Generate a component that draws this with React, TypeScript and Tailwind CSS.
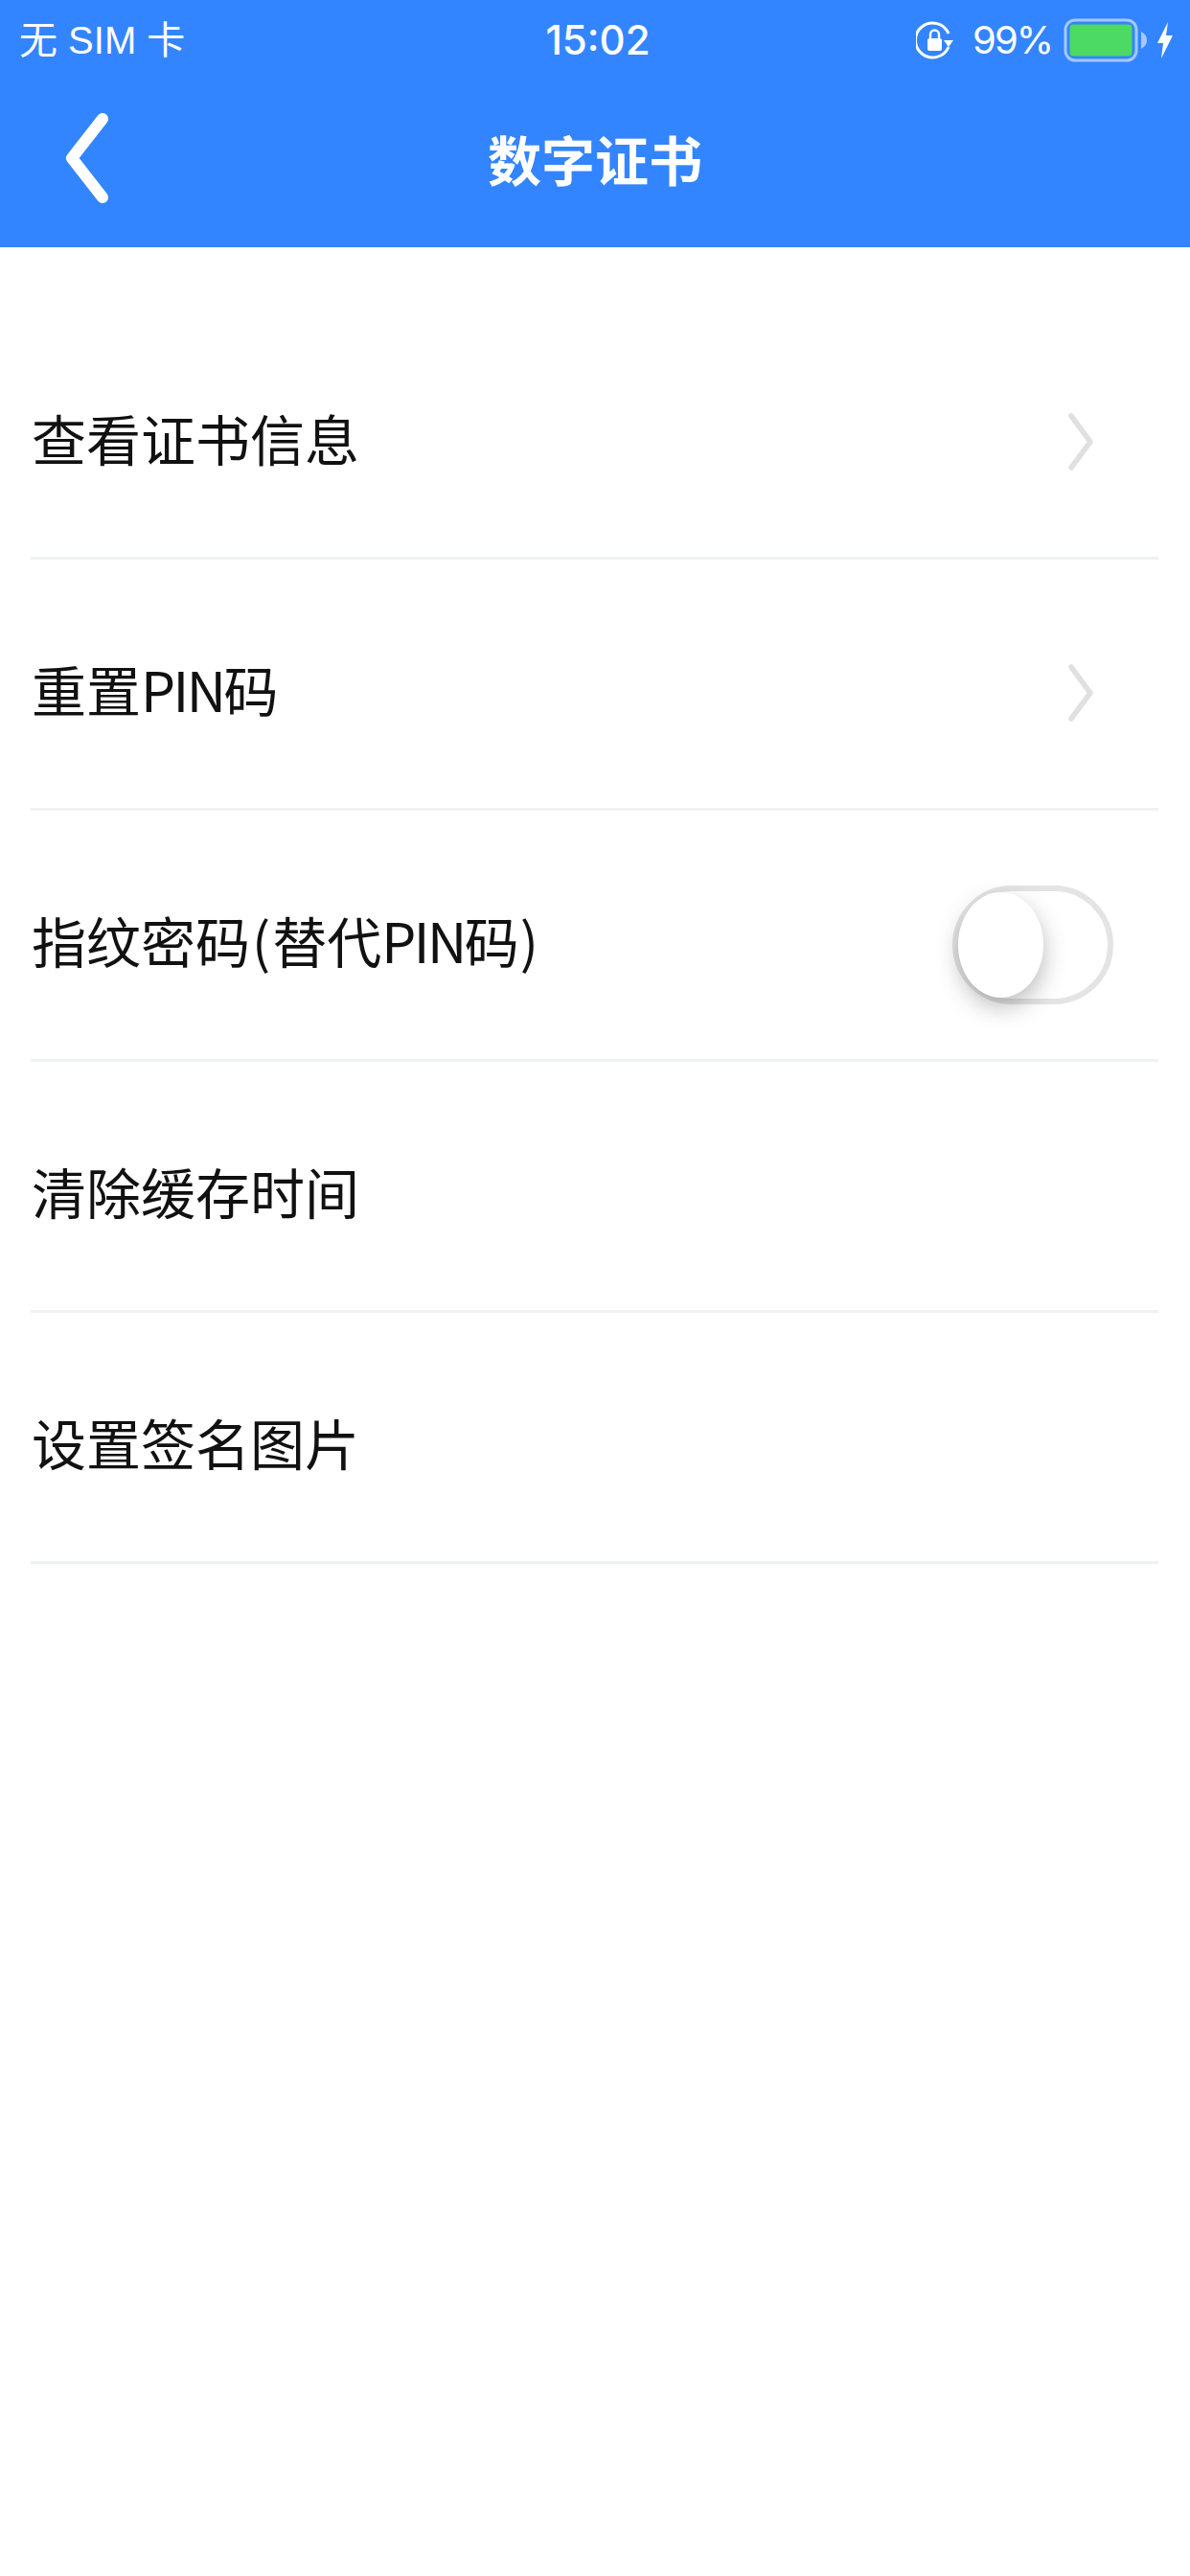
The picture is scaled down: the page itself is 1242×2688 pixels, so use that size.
const font = { fontFamily: '"Noto Sans CJK SC", "Liberation Sans", sans-serif' };

function Chevron() {
  return (
    <svg width="30" height="66" viewBox="0 0 30 66" fill="none" className="mr-[67px] mt-[-2px]">
      <path d="M6 6 L26 33 L6 60" stroke="#e0e0e0" strokeWidth="5.5" strokeLinecap="round" strokeLinejoin="round" />
    </svg>
  );
}

function Toggle() {
  return (
    <div className="relative mr-[47px] h-[124px] w-[168px] rounded-[62px] border-[6px] border-[#e4e4e4] bg-white">
      <div className="absolute left-0 top-[1px] h-[110px] w-[89px] rounded-[50%] bg-white shadow-[1px_10px_24px_rgba(0,0,0,0.26)]" />
    </div>
  );
}

function Row({ label, right }: { label: React.ReactNode; right?: React.ReactNode }) {
  return (
    <div className="flex h-[262px] items-center justify-between border-b-[3px] border-[#f0f1f1] pt-[20px]">
      <span className="ml-[1px] mt-[-10px] text-[57px] leading-none text-[#111]">{label}</span>
      {right}
    </div>
  );
}

export default function App() {
  return (
    <div className="min-h-[2688px] w-[1242px] bg-white" style={font}>
      <header className="h-[258px] bg-[#3385ff] text-white">
        <div className="flex h-[83px] items-center justify-between pl-[20px] pr-[17px]">
          <span className="w-[400px] text-[40px] leading-none" style={{ fontFamily: '"Liberation Sans", "Noto Sans CJK SC", sans-serif' }}>无 SIM 卡</span>
          <span className="ml-[3px] text-[42px] font-medium leading-none" style={{ fontFamily: 'Inter, sans-serif' }}>15:02</span>
          <div className="flex w-[400px] items-center justify-end">
            <svg width="40" height="42" viewBox="0 0 40 42" fill="none" className="mr-[19px]">
              <path d="M34 28 A18 18 0 1 1 34 14" stroke="#fff" strokeWidth="3" fill="none" />
              <path d="M29 21 L39 21 L34 28 Z" fill="#fff" />
              <rect x="12" y="19" width="15" height="13" rx="2" fill="#fff" />
              <path d="M15 19 v-4 a4.5 4.5 0 0 1 9 0 v4" stroke="#fff" strokeWidth="2.4" fill="none" />
            </svg>
            <span className="mr-[12px] text-[40px] leading-none tracking-[-2px]" style={{ fontFamily: 'Inter, sans-serif' }}>99%</span>
            <svg width="88" height="46" viewBox="0 0 88 46" fill="none" className="mr-[9px]">
              <rect x="2" y="2" width="74" height="42" rx="10" stroke="#a5c8ff" strokeWidth="3" />
              <rect x="6.5" y="6.5" width="65" height="33" rx="4" fill="#4cd964" />
              <path d="M81 14 q6 3 6 9 q0 6 -6 9 Z" fill="#a5c8ff" />
            </svg>
            <svg width="18" height="40" viewBox="0 0 18 40">
              <path d="M12 1 L1 23 H7 L5 39 L17 15 H10 Z" fill="#fff" />
            </svg>
          </div>
        </div>
        <div className="relative flex h-[175px] items-center justify-center pb-[11px]">
          <svg width="60" height="106" viewBox="0 0 60 106" fill="none" className="absolute left-[60px] top-[29px]">
            <path d="M47 12 L15 53 L47 94" stroke="#fff" strokeWidth="12" strokeLinecap="round" strokeLinejoin="round" />
          </svg>
          <h1 className="text-[56px] font-bold leading-none">数字证书</h1>
        </div>
      </header>
      <main className="pl-[32px] pr-[33px] pt-[64px]">
        <Row label="查看证书信息" right={<Chevron />} />
        <Row label={<>重置<span className="tracking-[-2.5px]">PIN</span>码</>} right={<Chevron />} />
        <Row label={<>指纹密码<span className="mx-[2px]">(</span>替代<span className="tracking-[-2.5px]">PIN</span>码<span className="ml-[1px]">)</span></>} right={<Toggle />} />
        <Row label="清除缓存时间" />
        <Row label="设置签名图片" />
      </main>
    </div>
  );
}
